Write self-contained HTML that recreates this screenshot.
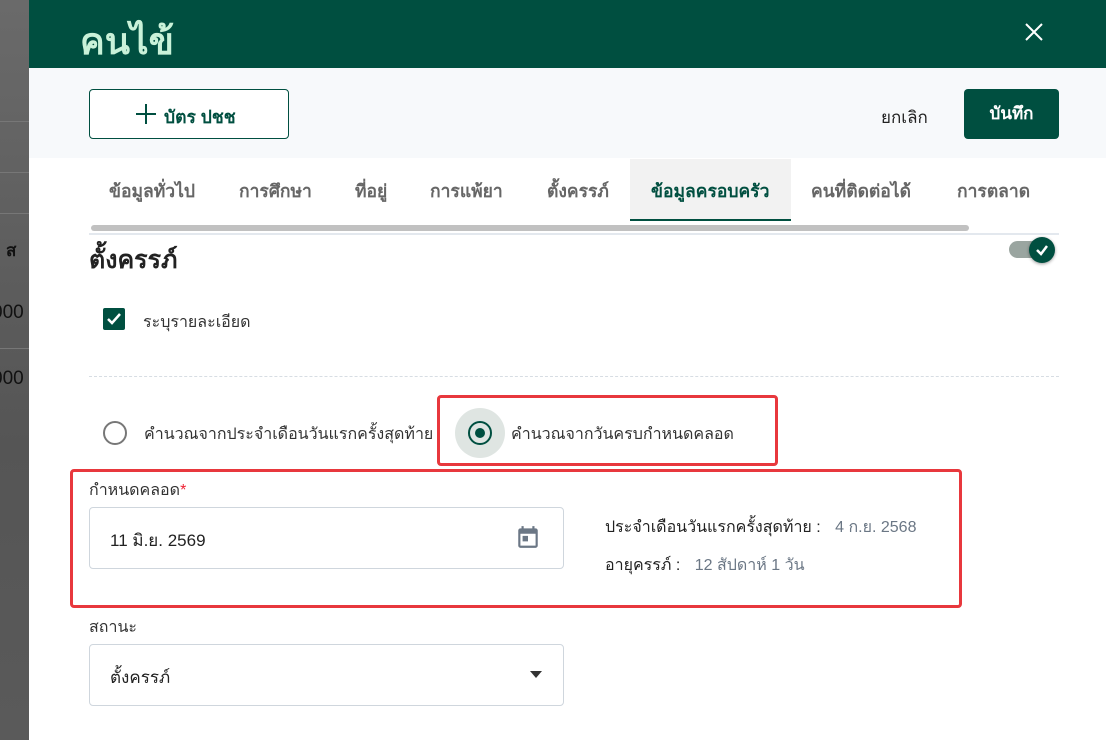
<!DOCTYPE html>
<html><head><meta charset="utf-8"><style>
*{box-sizing:border-box;margin:0;padding:0}
body{width:1106px;height:740px;overflow:hidden;position:relative;font-family:"Liberation Sans","Noto Sans CJK SC",sans-serif;background:#fff;color:#333}
.a{position:absolute}
.left{left:0;top:0;width:29px;height:740px;background:linear-gradient(#6a6a6a,#555 60%,#5a5a5a)}
.hdr{left:29px;top:0;width:1077px;height:68px;background:#004f40}
.bar{left:29px;top:68px;width:1077px;height:90px;background:#f7f9fb}
.tab{top:177px;font-size:17.5px;font-weight:bold;color:#666}
.lbl{font-size:16px;color:#333}
.box{border:1px solid #cfd6dd;border-radius:4px;background:#fff}
.red{border:3px solid #e8383d;border-radius:4px}
</style></head><body>
<div class="a left">
 <div class="a" style="left:0;top:121px;width:29px;border-top:1px solid #777"></div>
 <div class="a" style="left:0;top:172px;width:29px;border-top:1px solid #777"></div>
 <div class="a" style="left:0;top:213px;width:29px;border-top:1px solid #777"></div>
 <div class="a" style="left:6px;top:237px;font-size:17px;font-weight:bold;color:#111">ส</div>
 <div class="a" style="left:-8px;top:302px;font-size:19px;color:#111">000</div>
 <div class="a" style="left:0;top:348px;width:29px;border-top:1px solid #777"></div>
 <div class="a" style="left:-8px;top:368px;font-size:19px;color:#111">000</div>
</div>
<div class="a hdr"></div>
<div class="a" style="left:80px;top:12px;font-size:37px;font-weight:bold;color:#c9f2d9">คนไข้</div>
<svg class="a" style="left:1024px;top:22px" width="20" height="20" viewBox="0 0 20 20"><path d="M2 2L18 18M18 2L2 18" stroke="#fff" stroke-width="2"/></svg>
<div class="a bar"></div>
<div class="a" style="left:89px;top:89px;width:200px;height:50px;border:1px solid #004f40;border-radius:4px;background:#fff"></div>
<svg class="a" style="left:135px;top:103px" width="22" height="22"><path d="M11 1V21M1 11H21" stroke="#004f40" stroke-width="2"/></svg>
<div class="a" style="left:164px;top:103px;font-size:17.5px;font-weight:bold;color:#004f40">บัตร ปชช</div>
<div class="a" style="left:881px;top:104px;font-size:17px;color:#222">ยกเลิก</div>
<div class="a" style="left:964px;top:89px;width:95px;height:50px;background:#004f40;border-radius:4px;color:#fff;font-size:17px;font-weight:bold;text-align:center;line-height:50px">บันทึก</div>
<div class="a" style="left:630px;top:159px;width:161px;height:62px;background:#f2f2f2;border-bottom:2px solid #004f40"></div>
<div class="a tab" style="left:109px">ข้อมูลทั่วไป</div>
<div class="a tab" style="left:239px">การศึกษา</div>
<div class="a tab" style="left:355px">ที่อยู่</div>
<div class="a tab" style="left:430px">การแพ้ยา</div>
<div class="a tab" style="left:547px">ตั้งครรภ์</div>
<div class="a tab" style="left:651px;color:#004f40">ข้อมูลครอบครัว</div>
<div class="a tab" style="left:811px">คนที่ติดต่อได้</div>
<div class="a tab" style="left:957px">การตลาด</div>
<div class="a" style="left:91px;top:225px;width:878px;height:6px;border-radius:3px;background:#c1c1c1"></div>
<div class="a" style="left:89px;top:233px;width:970px;height:2px;background:#e3e8ee"></div>
<div class="a" style="left:89px;top:240px;font-size:25px;font-weight:bold;color:#222">ตั้งครรภ์</div>
<div class="a" style="left:1009px;top:241px;width:36px;height:17px;border-radius:9px;background:#9aa5a0"></div>
<div class="a" style="left:1029px;top:237px;width:26px;height:26px;border-radius:50%;background:#004f40;box-shadow:0 1px 3px rgba(0,0,0,.4)"></div>
<svg class="a" style="left:1033px;top:241px" width="18" height="18"><path d="M4 9L8 13L14 5" stroke="#fff" stroke-width="2.5" fill="none"/></svg>
<div class="a" style="left:103px;top:308px;width:22px;height:22px;border-radius:2px;background:#004f40"></div>
<svg class="a" style="left:103px;top:308px" width="22" height="22"><path d="M5 11L9 15L17 6" stroke="#fff" stroke-width="2.5" fill="none"/></svg>
<div class="a lbl" style="left:143px;top:310px">ระบุรายละเอียด</div>
<div class="a" style="left:89px;top:376px;width:970px;border-top:1px dashed #d7dde3"></div>
<div class="a" style="left:103px;top:421px;width:24px;height:24px;border-radius:50%;border:2px solid #777"></div>
<div class="a lbl" style="left:144px;top:422px">คำนวณจากประจำเดือนวันแรกครั้งสุดท้าย</div>
<div class="a red" style="left:437px;top:395px;width:341px;height:71px"></div>
<div class="a" style="left:455px;top:408px;width:50px;height:50px;border-radius:50%;background:#dfe5e2"></div>
<div class="a" style="left:468px;top:421px;width:24px;height:24px;border-radius:50%;border:2px solid #004f40"></div>
<div class="a" style="left:475px;top:428px;width:10px;height:10px;border-radius:50%;background:#004f40"></div>
<div class="a lbl" style="left:511px;top:422px">คำนวณจากวันครบกำหนดคลอด</div>
<div class="a red" style="left:70px;top:469px;width:892px;height:139px"></div>
<div class="a lbl" style="left:89px;top:478px">กำหนดคลอด<span style="color:#e23">*</span></div>
<div class="a box" style="left:89px;top:507px;width:475px;height:62px"></div>
<div class="a" style="left:110px;top:527px;font-size:17px;color:#222">11 มิ.ย. 2569</div>
<svg class="a" style="left:515px;top:524px" width="26" height="26" viewBox="0 0 24 24"><path fill="#6b7785" d="M19 4h-1V2h-2v2H8V2H6v2H5c-1.1 0-2 .9-2 2v14c0 1.1.9 2 2 2h14c1.1 0 2-.9 2-2V6c0-1.1-.9-2-2-2zm0 16H5V9h14v11zM7 11h5v5H7z"/></svg>
<div class="a lbl" style="left:605px;top:515px;color:#222">ประจำเดือนวันแรกครั้งสุดท้าย : <span style="color:#6b7785;margin-left:10px">4 ก.ย. 2568</span></div>
<div class="a lbl" style="left:605px;top:553px;color:#222">อายุครรภ์ : <span style="color:#6b7785;margin-left:10px">12 สัปดาห์ 1 วัน</span></div>
<div class="a lbl" style="left:89px;top:615px">สถานะ</div>
<div class="a box" style="left:89px;top:644px;width:475px;height:62px"></div>
<div class="a" style="left:110px;top:664px;font-size:17px;color:#222">ตั้งครรภ์</div>
<svg class="a" style="left:530px;top:671px" width="12" height="8"><path d="M0 0H12L6 7Z" fill="#333"/></svg>
</body></html>
